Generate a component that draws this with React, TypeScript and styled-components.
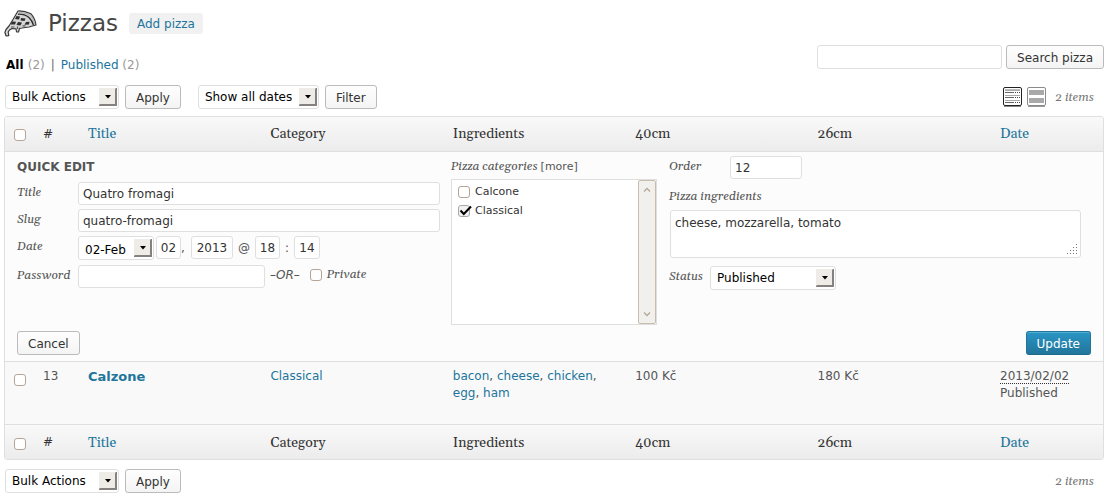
import React from "react";
import styled, { createGlobalStyle, css } from "styled-components";

const sans = '"DejaVu Sans", sans-serif';
const serif = 'Gelasio, Georgia, "Liberation Serif", serif';
const line = "#dfdfdf";
const link = "#21759b";

const GlobalStyle = createGlobalStyle`
  *, *::before, *::after { box-sizing: border-box; }
  body {
    margin: 0;
    background: #fff;
    color: #555;
    font: 12px/17px ${sans};
  }
  input, select, textarea, button { font: inherit; margin: 0; }
`;

const Page = styled.main`
  padding: 8px 7px 8px 4px;
`;

const Heading = styled.header`
  display: flex;
  align-items: center;
  gap: 11px;
  height: 30px;
`;

const Title = styled.h1`
  margin: 0;
  font-size: 23px;
  line-height: 30px;
  font-weight: 400;
  color: #464646;
`;

const AddLink = styled.a`
  padding: 3px 8px 1px;
  border-radius: 3px;
  background: #f1f1f1;
  color: ${link};
  line-height: 17px;
  text-decoration: none;
`;

const SubHeader = styled.div`
  display: flex;
  justify-content: space-between;
  margin-top: 7px;
`;

const Views = styled.nav`
  display: flex;
  gap: 6px;
  padding: 12px 0 0 2px;
  margin-bottom: -1px;
  color: #666;
`;

const ViewLink = styled.a<{ $current?: boolean }>`
  color: ${(p) => (p.$current ? "#000" : link)};
  font-weight: ${(p) => (p.$current ? 700 : 400)};
  text-decoration: none;
`;

const Count = styled.span`
  color: #999;
  font-weight: 400;
`;

const SearchForm = styled.form`
  display: flex;
  gap: 4px;
`;

const field = css`
  border: 1px solid ${line};
  border-radius: 3px;
  background: #fff;
  color: #333;
  outline: none;
`;

const TextInput = styled.input<{ $width?: number; $tall?: boolean; $center?: boolean }>`
  ${field}
  width: ${(p) => (p.$width ? `${p.$width}px` : "100%")};
  height: ${(p) => (p.$tall ? 24 : 23)}px;
  padding: 1px ${(p) => (p.$center ? 0 : 4)}px 0;
  text-align: ${(p) => (p.$center ? "center" : "left")};
`;

const Button = styled.button<{ $primary?: boolean }>`
  height: 24px;
  padding: 2px 10px 0;
  border: 1px solid #bbb;
  border-radius: 3px;
  background: linear-gradient(#fefefe, #f4f4f4);
  color: #333;
  line-height: 20px;
  white-space: nowrap;
  ${(p) =>
    p.$primary &&
    css`
      border-color: #21759b #21759b #1e6a8d;
      background: linear-gradient(#2a95c5, #21759b);
      box-shadow: inset 0 1px 0 rgba(120, 200, 230, 0.5);
      color: #fff;
    `}
`;

const Toolbar = styled.div`
  display: flex;
  align-items: center;
  height: 24px;
  margin: 12px 0 7px;
  padding: 0 10px 0 1px;
`;

const BottomToolbar = styled(Toolbar)`
  margin: 9px 0 0;
`;

const ToolGroup = styled.div`
  display: flex;
  gap: 6px;
  margin-right: 17px;
`;

const ToolEnd = styled.div`
  display: flex;
  align-items: center;
  gap: 5px;
  margin-left: auto;
`;

const ItemCount = styled.span`
  margin-left: 4px;
  padding-top: 1px;
  color: #777;
  font: italic 12px/18px ${serif};
`;

const ModeButton = styled.button`
  display: block;
  width: 19px;
  height: 20px;
  padding: 0;
  border: 0;
  background: none;
  svg { display: block; }
`;

const SelectBox = styled.span<{ $width: number }>`
  position: relative;
  display: inline-block;
  flex: none;
  width: ${(p) => p.$width}px;
  height: 24px;
  svg {
    position: absolute;
    top: 3px;
    right: 2px;
    pointer-events: none;
  }
`;

const NativeSelect = styled.select`
  ${field}
  appearance: none;
  display: block;
  width: 100%;
  height: 24px;
  padding: 1px 20px 0 6px;
  color: #000;
`;

const Table = styled.table`
  width: 100%;
  table-layout: fixed;
  border: 1px solid ${line};
  border-radius: 3px;
  border-spacing: 0;
  overflow: hidden;
`;

const Col = styled.col<{ $width?: number }>`
  width: ${(p) => (p.$width ? `${p.$width}px` : "auto")};
`;

const HeadCell = styled.th<{ $foot?: boolean; $plain?: boolean }>`
  height: 35px;
  padding: ${(p) => (p.$foot || p.$plain ? "1px 8px 0" : "0 8px 1px")};
  border: 0 solid ${line};
  border-width: ${(p) => (p.$foot ? "1px 0 0" : "0 0 1px")};
  background: linear-gradient(#f9f9f9, #ececec);
  color: #333;
  font: ${(p) => (p.$plain ? `12px/17px ${sans}` : `14px/18px ${serif}`)};
  text-align: left;
  vertical-align: middle;
`;

const CheckHead = styled(HeadCell)`
  padding: ${(p) => (p.$foot ? 4 : 2)}px 0 0 9px;
`;

const HeadLink = styled.a`
  color: ${link};
  text-decoration: none;
`;

const Cell = styled.td`
  height: 62px;
  padding: 6px 8px 5px;
  background: #f9f9f9;
  vertical-align: top;
`;

const CheckCell = styled(Cell)`
  padding: 12px 0 0 9px;
`;

const TextLink = styled.a<{ $strong?: boolean }>`
  color: ${link};
  font-weight: ${(p) => (p.$strong ? 700 : 400)};
  font-size: ${(p) => (p.$strong ? 13 : 12)}px;
  text-decoration: none;
`;

const Abbr = styled.abbr`
  border-bottom: 1px dotted #333;
  text-decoration: none;
`;

const EditCell = styled.td`
  padding: 4px 12px 6px;
  border-bottom: 1px solid ${line};
  background: #fcfcfc;
`;

const EditColumns = styled.div`
  display: grid;
  grid-template-columns: minmax(0, 1fr) 206px minmax(0, 1fr);
  gap: 11px;
  min-height: 169px;
`;

const EditColumn = styled.div`
  display: flex;
  flex-direction: column;
  gap: 4px;
`;

const EditTitle = styled.h2`
  margin: 3px 0 2px;
  color: #555;
  font-size: 12px;
  line-height: 17px;
`;

const labelFont = css`
  color: #555;
  font: italic 12px/18px ${serif};
`;

const FieldLabel = styled.label<{ $width?: number }>`
  ${labelFont}
  flex: none;
  width: ${(p) => (p.$width ? `${p.$width}px` : "auto")};
  padding-top: 2px;
`;

const FieldRow = styled.div`
  display: flex;
  align-items: flex-start;
`;

const DateFields = styled.div`
  display: flex;
  align-items: flex-start;
  height: 25px;
  line-height: 24px;
`;

const Separator = styled.span<{ $width: number; $start?: boolean }>`
  width: ${(p) => p.$width}px;
  text-align: ${(p) => (p.$start ? "left" : "center")};
`;

const OrText = styled.em`
  margin: 0 10px 0 5px;
  line-height: 20px;
`;

const PrivateLabel = styled.label`
  ${labelFont}
  display: flex;
  align-items: center;
  gap: 5px;
  height: 20px;
`;

const CategoryHeading = styled.div`
  ${labelFont}
  height: 19px;
  padding-top: 2px;
`;

const MoreButton = styled.button`
  padding: 0;
  border: 0;
  background: none;
  color: #555;
  font: 11px/18px ${sans};
`;

const CategoryBox = styled.div`
  display: flex;
  justify-content: space-between;
  height: 146px;
  border: 1px solid ${line};
  background: #fff;
`;

const CategoryList = styled.ul`
  margin: 0;
  padding: 2px 6px;
  list-style: none;
`;

const CategoryLabel = styled.label`
  display: flex;
  align-items: center;
  gap: 5px;
  height: 19px;
  color: #333;
  font-size: 11px;
`;

const ScrollBar = styled.div`
  display: flex;
  flex-direction: column;
  justify-content: space-between;
  align-items: center;
  width: 18px;
  padding: 6px 0;
  border: 1px solid #c9bbad;
  border-radius: 2px;
  background: #f2f0ed;
`;

const IngredientsLabel = styled(FieldLabel)`
  margin: 3px 0 0 1px;
`;

const OptionRow = styled(FieldRow)`
  padding-left: 1px;
`;

const AreaBox = styled.div`
  position: relative;
  height: 48px;
  margin: 0 10px 4px 2px;
  svg {
    position: absolute;
    right: 3px;
    bottom: 3px;
    pointer-events: none;
  }
`;

const TextArea = styled.textarea`
  ${field}
  display: block;
  width: 100%;
  height: 48px;
  padding: 4px;
  resize: none;
`;

const EditActions = styled.div`
  display: flex;
  justify-content: space-between;
  margin-top: 6px;
`;

const CheckWrap = styled.span`
  position: relative;
  display: block;
  width: 12px;
  height: 12px;
  svg {
    position: absolute;
    top: 0;
    left: 1px;
    display: none;
    pointer-events: none;
  }
  input:checked + svg { display: block; }
`;

const CheckInput = styled.input`
  appearance: none;
  display: block;
  width: 12px;
  height: 12px;
  border: 1px solid #b5a598;
  border-radius: 3px;
  background: #fff;
  &:checked {
    border-color: #a9a9a9;
    background: #f1f1f1;
  }
`;

function Checkbox(props: React.InputHTMLAttributes<HTMLInputElement>) {
  return (
    <CheckWrap>
      <CheckInput type="checkbox" {...props} />
      <svg width="13" height="12" viewBox="0 0 13 12" aria-hidden="true">
        <path d="M1.5 5.5 L4.8 9 L12 1.5" fill="none" stroke="#000" strokeWidth="2" />
      </svg>
    </CheckWrap>
  );
}

function Select({ width, label, id, children }: { width: number; label?: string; id?: string; children: React.ReactNode }) {
  return (
    <SelectBox $width={width}>
      <NativeSelect id={id} aria-label={label}>{children}</NativeSelect>
      <svg width="18" height="18" viewBox="0 0 18 18" aria-hidden="true">
        <path d="M0 0H18V18H0Z" fill="#efebe7" />
        <path d="M0 18V17L1 16H16V1L17 0H18V18Z" fill="#85817e" />
        <path d="M6 7H12L9 10.5Z" fill="#000" />
      </svg>
    </SelectBox>
  );
}

function PizzaIcon() {
  return (
    <svg width="33" height="27" viewBox="0 0 33 27" aria-hidden="true">
      <path
        d="M14 1 C18 0.8 23 2 27 3.8 C29.5 6.5 31.3 10.5 32 15 L25 17 L18 18 L15.5 18.3 L14.5 22 L12.6 22 L12 18.8 L8 18.5 L5.5 20 L4.2 22 L4.8 25.6 L2 25.8 L0.9 22.5 L2 19.5 L5 16 L9 9.5 Z"
        fill="#d6d6d6" stroke="#3a3a3a" strokeWidth="1.2" strokeLinejoin="round"
      />
      <path d="M14 4.2 C18 4 22 5.2 25 7.5 C27 9.5 28.5 12 29.5 15" fill="none" stroke="#2c2c2c" strokeWidth="1.4" />
      <path d="M15 2.6 C19 2.2 23 3.5 26.5 5.5 C28.5 8 30 11 30.8 14" fill="none" stroke="#b5b5b5" strokeWidth="1.2" />
      <path d="M12.5 6L16 6.5L15 9.5L11 9ZM17 8L21.5 8.5L20.5 11L16.5 10.5ZM8 11.5L12 11.8L11 14.5L6.8 14.5ZM14 12L18 12.5L16.5 15.5L12.5 15ZM22 12L25.5 11.8L25 14.5L20.5 14.8Z" fill="#2f2f2f" />
      <path d="M7 17H10.5M13.5 16.5V19M18.5 15.8L21.5 15.8" stroke="#555" strokeWidth="1.2" />
    </svg>
  );
}

function ListIcon() {
  return (
    <svg width="19" height="20" viewBox="0 0 19 20" aria-hidden="true">
      <rect x="0.5" y="0.5" width="18" height="18" rx="1.5" fill="#fff" stroke="#222" />
      <path d="M1 19.5H18" stroke="#888" />
      <rect x="2" y="2" width="15" height="1" fill="#bbb" />
      <path d="M2 3.5H17M2 8.5H17M2 13.5H17" stroke="#aaa" />
      <path d="M2 5.5H11M2 10.5H11M2 15.5H11" stroke="#666" />
      <path d="M12 5.5H17M12 10.5H17M12 15.5H17" stroke="#444" strokeDasharray="1 1" />
    </svg>
  );
}

function ExcerptIcon() {
  return (
    <svg width="19" height="20" viewBox="0 0 19 20" aria-hidden="true">
      <rect x="0.5" y="0.5" width="18" height="18" rx="1.5" fill="#fff" stroke="#8a8a8a" />
      <path d="M1 19.5H18" stroke="#999" />
      <path d="M2 3H17V8H2ZM2 11H17V16H2Z" fill="#a9a9a9" />
    </svg>
  );
}

const columns = ["Title", "Category", "Ingredients", "40cm", "26cm", "Date"];
const ingredients = ["bacon", "cheese", "chicken", "egg", "ham"];

function HeadRow({ foot }: { foot?: boolean }) {
  return (
    <tr>
      <CheckHead $foot={foot} $plain><Checkbox aria-label="Select all" /></CheckHead>
      <HeadCell $foot={foot} $plain>#</HeadCell>
      {columns.map((name) => (
        <HeadCell key={name} $foot={foot}>
          {name === "Title" || name === "Date" ? (
            <HeadLink href="#sort">{name}</HeadLink>
          ) : (
            name
          )}
        </HeadCell>
      ))}
    </tr>
  );
}

function QuickEdit() {
  return (
    <tr>
      <EditCell colSpan={8}>
        <EditColumns>
          <EditColumn>
            <EditTitle>QUICK EDIT</EditTitle>
            <FieldRow>
              <FieldLabel $width={61} htmlFor="title">Title</FieldLabel>
              <TextInput id="title" defaultValue="Quatro fromagi" />
            </FieldRow>
            <FieldRow>
              <FieldLabel $width={61} htmlFor="slug">Slug</FieldLabel>
              <TextInput id="slug" defaultValue="quatro-fromagi" />
            </FieldRow>
            <FieldRow>
              <FieldLabel $width={61} htmlFor="month">Date</FieldLabel>
              <DateFields>
                <Select id="month" width={76}><option>02-Feb</option></Select>
                <Separator $width={2} />
                <TextInput $width={25} $center aria-label="Day" defaultValue="02" />
                <Separator $width={10} $start>,</Separator>
                <TextInput $width={42} $center aria-label="Year" defaultValue="2013" />
                <Separator $width={22}>@</Separator>
                <TextInput $width={25} $center aria-label="Hour" defaultValue="18" />
                <Separator $width={14}>:</Separator>
                <TextInput $width={26} $center aria-label="Minute" defaultValue="14" />
              </DateFields>
            </FieldRow>
            <FieldRow>
              <FieldLabel $width={61} htmlFor="password">Password</FieldLabel>
              <TextInput id="password" $width={187} />
              <OrText>–OR–</OrText>
              <PrivateLabel><Checkbox />Private</PrivateLabel>
            </FieldRow>
          </EditColumn>

          <EditColumn>
            <CategoryHeading>
              Pizza categories <MoreButton type="button">[more]</MoreButton>
            </CategoryHeading>
            <CategoryBox>
              <CategoryList>
                <li><CategoryLabel><Checkbox />Calcone</CategoryLabel></li>
                <li><CategoryLabel><Checkbox defaultChecked />Classical</CategoryLabel></li>
              </CategoryList>
              <ScrollBar aria-hidden="true">
                <svg width="8" height="5" viewBox="0 0 8 5"><path d="M1 4.5L4 1.5L7 4.5" fill="none" stroke="#b5a99c" strokeWidth="1.4" /></svg>
                <svg width="8" height="5" viewBox="0 0 8 5"><path d="M1 0.5L4 3.5L7 0.5" fill="none" stroke="#b5a99c" strokeWidth="1.4" /></svg>
              </ScrollBar>
            </CategoryBox>
          </EditColumn>

          <EditColumn>
            <OptionRow>
              <FieldLabel $width={61} htmlFor="order">Order</FieldLabel>
              <TextInput id="order" $width={72} defaultValue="12" />
            </OptionRow>
            <IngredientsLabel htmlFor="ingredients">Pizza ingredients</IngredientsLabel>
            <AreaBox>
              <TextArea id="ingredients" defaultValue="cheese, mozzarella, tomato" />
              <svg width="11" height="11" viewBox="0 0 11 11" aria-hidden="true">
                <path d="M9 0h1v1h-1zM6 3h1v1h-1zM9 3h1v1h-1zM3 6h1v1h-1zM6 6h1v1h-1zM9 6h1v1h-1zM0 9h1v1h-1zM3 9h1v1h-1zM6 9h1v1h-1zM9 9h1v1h-1z" fill="#777" />
              </svg>
            </AreaBox>
            <OptionRow>
              <FieldLabel $width={41} htmlFor="status">Status</FieldLabel>
              <Select id="status" width={126}><option>Published</option></Select>
            </OptionRow>
          </EditColumn>
        </EditColumns>
        <EditActions>
          <Button type="button">Cancel</Button>
          <Button type="button" $primary>Update</Button>
        </EditActions>
      </EditCell>
    </tr>
  );
}

export default function App() {
  return (
    <>
      <GlobalStyle />
      <Page>
        <Heading>
          <PizzaIcon />
          <Title>Pizzas</Title>
          <AddLink href="#add">Add pizza</AddLink>
        </Heading>

        <SubHeader>
          <Views>
            <ViewLink href="#all" $current>All <Count>(2)</Count></ViewLink>
            <span>|</span>
            <ViewLink href="#published">Published <Count>(2)</Count></ViewLink>
          </Views>
          <SearchForm>
            <TextInput type="search" $width={185} $tall aria-label="Search" />
            <Button type="button">Search pizza</Button>
          </SearchForm>
        </SubHeader>

        <Toolbar>
          <ToolGroup>
            <Select width={114} label="Bulk actions"><option>Bulk Actions</option></Select>
            <Button type="button">Apply</Button>
          </ToolGroup>
          <ToolGroup>
            <Select width={121} label="Filter by date"><option>Show all dates</option></Select>
            <Button type="button">Filter</Button>
          </ToolGroup>
          <ToolEnd>
            <ModeButton type="button" aria-label="List view"><ListIcon /></ModeButton>
            <ModeButton type="button" aria-label="Excerpt view"><ExcerptIcon /></ModeButton>
            <ItemCount>2 items</ItemCount>
          </ToolEnd>
        </Toolbar>

        <Table>
          <colgroup>
            <Col $width={30} />
            <Col $width={45} />
            <Col />
            <Col />
            <Col />
            <Col />
            <Col />
            <Col $width={111} />
          </colgroup>
          <thead><HeadRow /></thead>
          <tbody>
            <QuickEdit />
            <tr>
              <CheckCell><Checkbox aria-label="Select Calzone" /></CheckCell>
              <Cell>13</Cell>
              <Cell><TextLink href="#calzone" $strong>Calzone</TextLink></Cell>
              <Cell><TextLink href="#classical">Classical</TextLink></Cell>
              <Cell>
                {ingredients.map((name, i) => (
                  <React.Fragment key={name}>
                    {i > 0 && ", "}
                    <TextLink href={`#${name}`}>{name}</TextLink>
                  </React.Fragment>
                ))}
              </Cell>
              <Cell>100 Kč</Cell>
              <Cell>180 Kč</Cell>
              <Cell><Abbr>2013/02/02</Abbr><br />Published</Cell>
            </tr>
          </tbody>
          <tfoot><HeadRow foot /></tfoot>
        </Table>

        <BottomToolbar>
          <ToolGroup>
            <Select width={114} label="Bulk actions"><option>Bulk Actions</option></Select>
            <Button type="button">Apply</Button>
          </ToolGroup>
          <ToolEnd><ItemCount>2 items</ItemCount></ToolEnd>
        </BottomToolbar>
      </Page>
    </>
  );
}
